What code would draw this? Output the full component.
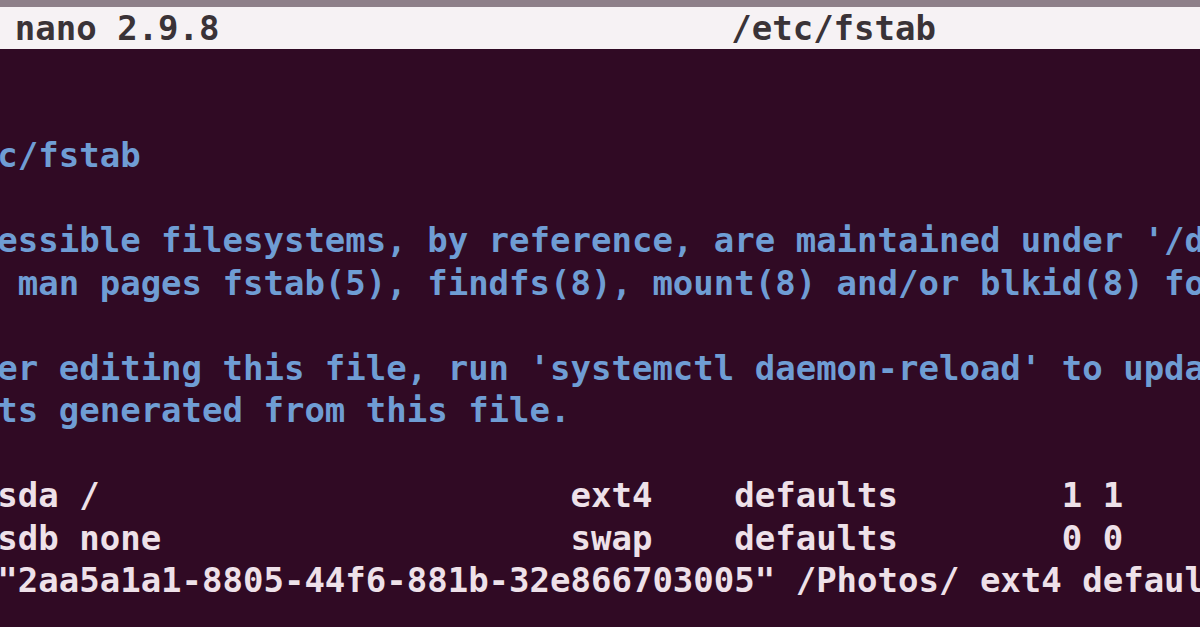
const title = "  GNU nano 2.9.8                         /etc/fstab"

const lines = [
  { text: "", comment: true },
  { text: "#", comment: true },
  { text: "# /etc/fstab", comment: true },
  { text: "#", comment: true },
  { text: "# Accessible filesystems, by reference, are maintained under '/dev/disk'", comment: true },
  { text: "# See man pages fstab(5), findfs(8), mount(8) and/or blkid(8) for more info", comment: true },
  { text: "#", comment: true },
  { text: "# After editing this file, run 'systemctl daemon-reload' to update systemd", comment: true },
  { text: "# units generated from this file.", comment: true },
  { text: "#", comment: true },
  { text: "/dev/sda /                       ext4    defaults        1 1", comment: false },
  { text: "/dev/sdb none                    swap    defaults        0 0", comment: false },
  { text: 'UUID="2aa5a1a1-8805-44f6-881b-32e866703005" /Photos/ ext4 defaults 0 0', comment: false },
  { text: "", comment: false },
]

const App = () => {
  return (
    <div className="h-[627px] w-[1200px] overflow-hidden bg-[#300a24] font-['DejaVu_Sans_Mono','Liberation_Mono',monospace] text-[34px] font-bold">
      <div className="h-[7px] bg-[#8e8089]" />
      <div className="h-[42px] bg-[#f6f2f4] text-[#3a3337]">
        <div className="-ml-[108px] whitespace-pre leading-[42px]">{title}</div>
      </div>
      <div className="-ml-[105px] whitespace-pre leading-[42.5px]">
        {lines.map((line, i) => (
          <div key={i} className={line.comment ? "h-[42.5px] text-[#6f9dd4]" : "h-[42.5px] text-[#eee1e9]"}>
            {line.text}
          </div>
        ))}
      </div>
    </div>
  )
}

export default App
